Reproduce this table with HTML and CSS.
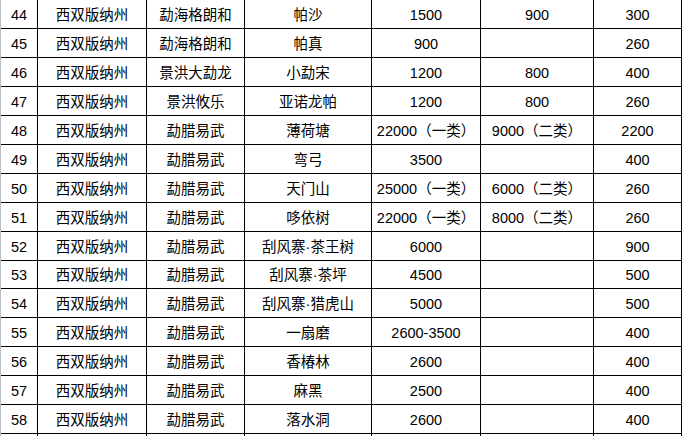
FILE: index.html
```html
<!DOCTYPE html>
<html lang="zh-CN">
<head>
<meta charset="utf-8">
<title>西双版纳州</title>
<link rel="stylesheet" href="styles.css">
</head>
<body>
<div class="sheet">
  <div class="c">44</div><div class="c">西双版纳州</div><div class="c">勐海格朗和</div><div class="c">帕沙</div><div class="c">1500</div><div class="c">900</div><div class="c">300</div>
  <div class="c">45</div><div class="c">西双版纳州</div><div class="c">勐海格朗和</div><div class="c">帕真</div><div class="c">900</div><div class="c"></div><div class="c">260</div>
  <div class="c">46</div><div class="c">西双版纳州</div><div class="c">景洪大勐龙</div><div class="c">小勐宋</div><div class="c">1200</div><div class="c">800</div><div class="c">400</div>
  <div class="c">47</div><div class="c">西双版纳州</div><div class="c">景洪攸乐</div><div class="c">亚诺龙帕</div><div class="c">1200</div><div class="c">800</div><div class="c">260</div>
  <div class="c">48</div><div class="c">西双版纳州</div><div class="c">勐腊易武</div><div class="c">薄荷塘</div><div class="c">22000（一类）</div><div class="c">9000（二类）</div><div class="c">2200</div>
  <div class="c">49</div><div class="c">西双版纳州</div><div class="c">勐腊易武</div><div class="c">弯弓</div><div class="c">3500</div><div class="c"></div><div class="c">400</div>
  <div class="c">50</div><div class="c">西双版纳州</div><div class="c">勐腊易武</div><div class="c">天门山</div><div class="c">25000（一类）</div><div class="c">6000（二类）</div><div class="c">260</div>
  <div class="c">51</div><div class="c">西双版纳州</div><div class="c">勐腊易武</div><div class="c">哆依树</div><div class="c">22000（一类）</div><div class="c">8000（二类）</div><div class="c">260</div>
  <div class="c">52</div><div class="c">西双版纳州</div><div class="c">勐腊易武</div><div class="c">刮风寨·茶王树</div><div class="c">6000</div><div class="c"></div><div class="c">900</div>
  <div class="c">53</div><div class="c">西双版纳州</div><div class="c">勐腊易武</div><div class="c">刮风寨·茶坪</div><div class="c">4500</div><div class="c"></div><div class="c">500</div>
  <div class="c">54</div><div class="c">西双版纳州</div><div class="c">勐腊易武</div><div class="c">刮风寨·猎虎山</div><div class="c">5000</div><div class="c"></div><div class="c">500</div>
  <div class="c">55</div><div class="c">西双版纳州</div><div class="c">勐腊易武</div><div class="c">一扇磨</div><div class="c">2600-3500</div><div class="c"></div><div class="c">400</div>
  <div class="c">56</div><div class="c">西双版纳州</div><div class="c">勐腊易武</div><div class="c">香椿林</div><div class="c">2600</div><div class="c"></div><div class="c">400</div>
  <div class="c">57</div><div class="c">西双版纳州</div><div class="c">勐腊易武</div><div class="c">麻黑</div><div class="c">2500</div><div class="c"></div><div class="c">400</div>
  <div class="c">58</div><div class="c">西双版纳州</div><div class="c">勐腊易武</div><div class="c">落水洞</div><div class="c">2600</div><div class="c"></div><div class="c">400</div>
  <div class="c"></div><div class="c"></div><div class="c"></div><div class="c"></div><div class="c"></div><div class="c"></div><div class="c"></div>
</div>
</body>
</html>
```
FILE: styles.css
```css
html, body {
  margin: 0;
  padding: 0;
  background: #ffffff;
  overflow: hidden;
  height: 436px;
}
.sheet {
  display: grid;
  grid-template-columns: 36px 108px 97px 126px 108px 112px 87px;
  grid-template-rows: repeat(9, 28px) 27px repeat(5, 28px) 2px;
  gap: 1px;
  background: #000000;
  border-left: 1px solid #b8bcc4;
  border-right: 1px solid #000000;
  width: max-content;
  font-family: "Liberation Sans", "Noto Sans CJK SC", sans-serif;
  font-size: 14.5px;
  color: #000000;
}
.c {
  background: #ffffff;
  display: flex;
  align-items: center;
  justify-content: center;
  white-space: nowrap;
  padding-top: 2px;
  box-sizing: border-box;
  line-height: 1;
  overflow: hidden;
}
```
